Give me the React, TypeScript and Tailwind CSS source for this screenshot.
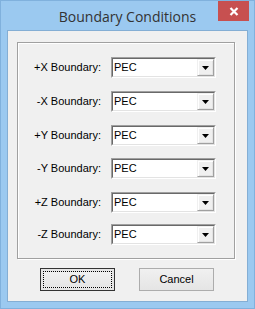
import React from "react";

const rows = [
  { label: "+X Boundary:", mt: "mt-[14px]" },
  { label: "-X Boundary:", mt: "mt-[13px]" },
  { label: "+Y Boundary:", mt: "mt-[13px]" },
  { label: "-Y Boundary:", mt: "mt-[12px]" },
  { label: "+Z Boundary:", mt: "mt-[13px]" },
  { label: "-Z Boundary:", mt: "mt-[11px]" },
];

function Combo() {
  return (
    <div className="ml-[10px] w-[105px] h-[21px] flex border border-t-[#a0a0a0] border-l-[#a0a0a0] border-b-white border-r-white">
      <div className="flex-1 flex border border-t-[#696969] border-l-[#696969] border-b-[#e3e3e3] border-r-[#e3e3e3] bg-white">
        <div className="flex-1 pl-[1px] text-[11px] leading-[17px] text-black">PEC</div>
        <div className="w-[17px] h-[17px] bg-[#f0f0f0] border border-t-[#f0f0f0] border-l-[#f0f0f0] border-b-[#a0a0a0] border-r-[#a0a0a0] shadow-[inset_1px_1px_0_#ffffff,inset_-1px_-1px_0_#e3e3e3] flex items-center justify-center">
          <svg width="7" height="4" viewBox="0 0 7 4">
            <path d="M0 0h7L3.5 4z" fill="#000" />
          </svg>
        </div>
      </div>
    </div>
  );
}

export default function App() {
  return (
    <div className="w-[255px] h-[309px] bg-[#9bc9f0] border border-[#80b1dd] flex flex-col font-['Liberation_Sans',sans-serif]">
      <div className="h-[29px] grid grid-cols-[1fr_auto_1fr]">
        <div />
        <div className="text-[14px] leading-[29px] text-[#333333] font-['Open_Sans',sans-serif] pt-[1px]">
          Boundary Conditions
        </div>
        <div className="flex justify-end pr-[5px]">
          <div className="w-[31px] h-[20px] bg-[#c75050] flex items-center justify-center">
            <svg width="10" height="9" viewBox="0 0 10 9">
              <path d="M1.5 1L8.5 8M8.5 1L1.5 8" stroke="#fff" strokeWidth="2.2" />
            </svg>
          </div>
        </div>
      </div>
      <div className="mx-[6px] h-[272px] border border-[#84aed4] bg-[#f0f0f0] flex flex-col pt-[11px]">
        <div className="ml-[9px] w-[218px] h-[217px] border border-[#a0a0a0] shadow-[inset_1px_1px_0_#ffffff,1px_1px_0_#ffffff] flex flex-col">
          {rows.map((r) => (
            <div key={r.label} className={`flex items-center ${r.mt}`}>
              <div className="w-[83px] text-right text-[11px] text-black">{r.label}</div>
              <Combo />
            </div>
          ))}
        </div>
        <div className="flex mt-[9px] pl-[32px] gap-[24px] text-[11px] text-black">
          <div className="w-[75px] h-[23px] border border-[#333333] bg-[#e5e5e5] flex p-[2px]">
            <div className="flex-1 border border-dotted border-[#000] flex items-center justify-center bg-gradient-to-b from-[#f0f0f0] to-[#e5e5e5]">
              OK
            </div>
          </div>
          <div className="w-[75px] h-[23px] border border-[#acacac] bg-gradient-to-b from-[#f0f0f0] to-[#e5e5e5] flex items-center justify-center">
            Cancel
          </div>
        </div>
      </div>
    </div>
  );
}
